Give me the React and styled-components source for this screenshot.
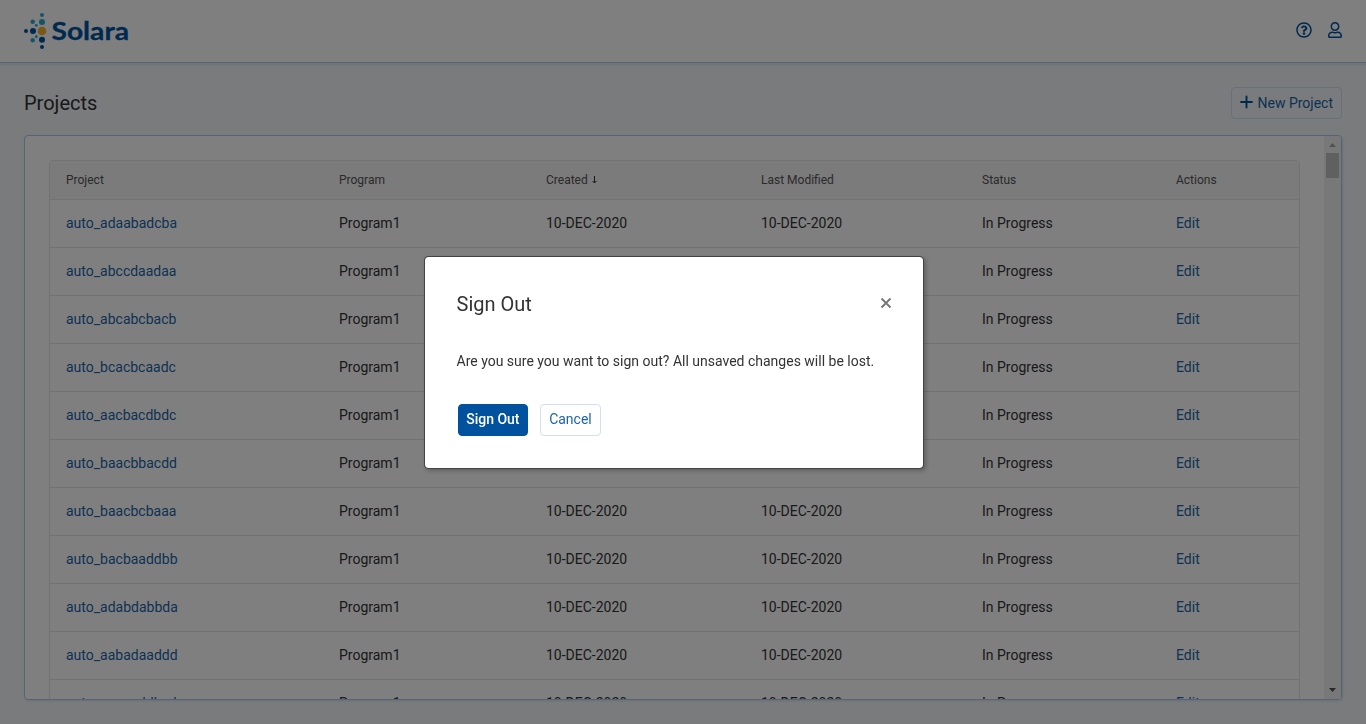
import React from "react";
import styled, { createGlobalStyle } from "styled-components";
import { FaRegQuestionCircle, FaRegUser } from "react-icons/fa";

const GlobalStyle = createGlobalStyle`
  * { box-sizing: border-box; }
  body {
    margin: 0;
    overflow: hidden;
    font-family: Roboto, "Liberation Sans", sans-serif;
    font-size: 14px;
    color: #333;
    background: #f2f6fa;
  }
`;

const Page = styled.div`
  height: 724px;
  display: flex;
  flex-direction: column;
`;

const Header = styled.header`
  height: 63px;
  flex: none;
  display: flex;
  align-items: center;
  justify-content: space-between;
  padding: 0 23px 0 24px;
  background: #fff;
  border-bottom: 1px solid #aec8ea;
  box-shadow: 0 2px 1px #dfe8f3;
`;

const LogoSvg = styled.svg`
  display: block;
`;

const LogoText = styled.text`
  font-family: Lato, sans-serif;
  font-weight: 700;
  font-size: 25px;
`;

const HeaderIcons = styled.div`
  display: flex;
  align-items: center;
  gap: 15px;
  padding-bottom: 2px;
  color: #00529f;
  font-size: 16px;
  svg { display: block; }
`;

const TitleBar = styled.div`
  height: 72px;
  flex: none;
  display: flex;
  align-items: center;
  justify-content: space-between;
  padding: 8px 24px 0;
`;

const Title = styled.h1`
  margin: 0;
  font-size: 20px;
  font-weight: 400;
  line-height: 24px;
`;

const Button = styled.button`
  height: 32px;
  display: flex;
  align-items: center;
  gap: 4.5px;
  padding: 0 8px;
  border: 1px solid ${(p) => (p.$primary ? "#00529f" : "#d3e0f3")};
  border-radius: 4px;
  background: ${(p) => (p.$primary ? "#00529f" : "transparent")};
  color: ${(p) => (p.$primary ? "#fff" : "#1b64a8")};
  font: ${(p) => (p.$primary ? 500 : 400)} 14px Roboto, sans-serif;
`;

const Panel = styled.main`
  height: 565px;
  margin: 0 24px;
  display: flex;
  overflow: hidden;
  background: #fff;
  border: 1px solid #aec8ea;
  border-radius: 4px;
  box-shadow: 1px 1px 2px #d5e2f0;
`;

const PanelContent = styled.div`
  flex: 1;
  padding: 24px 24px 0;
`;

const Table = styled.div`
  border: 1px solid #e4e4e4;
  border-radius: 4px;
`;

const Row = styled.div`
  display: grid;
  grid-template-columns: 273px 207px 215px 221px 194px 1fr;
  align-items: center;
  height: 48px;
  padding: 0 0 2px 16px;
  border-bottom: 1px solid #e4e4e4;
`;

const HeadRow = styled(Row)`
  height: 39px;
  padding-bottom: 0;
  background: #f6f6f6;
  border-radius: 3px 3px 0 0;
  font-size: 12px;
  color: #555;
`;

const Link = styled.span`
  color: #1b64a8;
`;

const SortHead = styled.span`
  display: flex;
  align-items: center;
  gap: 4px;
`;

const Scrollbar = styled.div`
  width: 17px;
  display: flex;
  flex-direction: column;
  align-items: center;
  background: #f1f1f1;
`;

const Arrow = styled.svg`
  display: block;
  flex: none;
`;

const Thumb = styled.div`
  width: 13px;
  height: 25px;
  background: #c1c1c1;
`;

const Track = styled.div`
  flex: 1;
`;

const Overlay = styled.div`
  position: fixed;
  inset: 0;
  display: flex;
  align-items: center;
  justify-content: center;
  padding-right: 18px;
  background: rgba(0, 0, 0, 0.5);
`;

const Dialog = styled.section`
  width: 500px;
  height: 213px;
  padding: 35px 31px 0 31.5px;
  border: 1px solid #444;
  border-radius: 4px;
  background: #fff;
  background-clip: padding-box;
  box-shadow: 2px 2px 4px rgba(0, 0, 0, 0.25);
`;

const DialogHead = styled.div`
  display: flex;
  align-items: center;
  justify-content: space-between;
`;

const CloseIcon = styled.svg`
  display: block;
  margin-bottom: 1px;
`;

const Message = styled.p`
  margin: 35px 0 33px;
  line-height: 20px;
`;

const Actions = styled.div`
  display: flex;
  gap: 12px;
  padding-left: 1.5px;
`;

const DialogButton = styled(Button)`
  padding: 0 ${(p) => (p.$primary ? "7.2px" : "8.4px")} 2px;
`;

const dots = [
  [18, 3, 2, "#2ba9cf"], [8.7, 9.7, 2.2, "#2ba9cf"], [18, 10, 3, "#2ba9cf"],
  [12.3, 13.3, 1.4, "#2ba9cf"], [18, 19, 4.3, "#f6ae2d"], [2, 19, 2, "#00529f"],
  [9, 19, 3, "#00529f"], [12.3, 24.7, 1.4, "#2ba9cf"], [8.7, 28.3, 2.2, "#2ba9cf"],
  [18, 27.7, 3, "#00529f"], [18, 35, 2, "#00529f"],
];

const projects = [
  "auto_adaabadcba", "auto_abccdaadaa", "auto_abcabcbacb", "auto_bcacbcaadc",
  "auto_aacbacdbdc", "auto_baacbbacdd", "auto_baacbcbaaa", "auto_bacbaaddbb",
  "auto_adabdabbda", "auto_aabadaaddd", "auto_aacaaddbcd",
];

function Logo() {
  return (
    <LogoSvg width="108" height="38" viewBox="0 0 108 38">
      {dots.map(([x, y, r, fill]) => (
        <circle key={`${x}-${y}`} cx={x} cy={y} r={r} fill={fill} />
      ))}
      <LogoText
        x="27.5"
        y="28.3"
        textLength="77.5"
        lengthAdjust="spacingAndGlyphs"
        fill="#00529f"
        stroke="#00529f"
        strokeWidth=".3"
      >
        Solara
      </LogoText>
    </LogoSvg>
  );
}

export default function App() {
  return (
    <>
      <GlobalStyle />
      <Page>
        <Header>
          <Logo />
          <HeaderIcons>
            <FaRegQuestionCircle />
            <FaRegUser />
          </HeaderIcons>
        </Header>
        <TitleBar>
          <Title>Projects</Title>
          <Button>
            <svg width="12.5" height="16" viewBox="0 0 12.5 16">
              <path d="M6.5 1.5v11M1 7h11" stroke="#00529f" strokeWidth="1.9" strokeLinecap="round" />
            </svg>
            New Project
          </Button>
        </TitleBar>
        <Panel>
          <PanelContent>
            <Table>
              <HeadRow>
                <span>Project</span>
                <span>Program</span>
                <SortHead>
                  Created
                  <svg width="6" height="8" viewBox="0 0 6 8">
                    <path d="M2.5 0v7M.5 5l2 2 2-2" fill="none" stroke="#333" strokeWidth="1" />
                  </svg>
                </SortHead>
                <span>Last Modified</span>
                <span>Status</span>
                <span>Actions</span>
              </HeadRow>
              {projects.map((name) => (
                <Row key={name}>
                  <Link>{name}</Link>
                  <span>Program1</span>
                  <span>10-DEC-2020</span>
                  <span>10-DEC-2020</span>
                  <span>In Progress</span>
                  <Link>Edit</Link>
                </Row>
              ))}
            </Table>
          </PanelContent>
          <Scrollbar>
            <Arrow width="17" height="17" viewBox="0 0 17 17"><path d="M5 11h7L8.5 7z" fill="#a3a3a3" /></Arrow>
            <Thumb />
            <Track />
            <Arrow width="17" height="17" viewBox="0 0 17 17"><path d="M5 6h7L8.5 10z" fill="#505050" /></Arrow>
          </Scrollbar>
        </Panel>
      </Page>
      <Overlay>
        <Dialog>
          <DialogHead>
            <Title>Sign Out</Title>
            <CloseIcon width="12" height="12" viewBox="0 0 12 12">
              <path d="M1.5 1.5l9 9M10.5 1.5l-9 9" stroke="#777" strokeWidth="1.9" />
            </CloseIcon>
          </DialogHead>
          <Message>Are you sure you want to sign out? All unsaved changes will be lost.</Message>
          <Actions>
            <DialogButton $primary>Sign Out</DialogButton>
            <DialogButton>Cancel</DialogButton>
          </Actions>
        </Dialog>
      </Overlay>
    </>
  );
}
